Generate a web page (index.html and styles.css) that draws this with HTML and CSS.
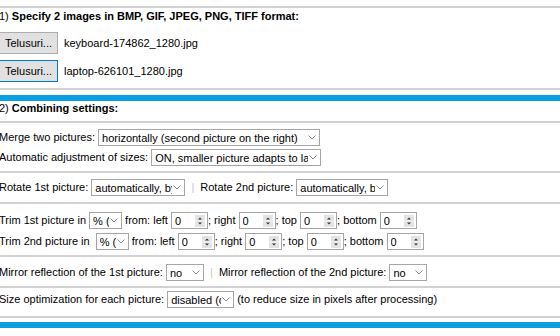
FILE: index.html
```html
<!DOCTYPE html>
<html>
<head>
<meta charset="utf-8">
<link rel="stylesheet" href="styles.css">
</head>
<body>
<div class="page">
  <div class="block b1">
    <div class="hd"><span class="n">1)</span> Specify 2 images in BMP, GIF, JPEG, PNG, TIFF format:</div>
    <div class="file"><button class="btn">Telusuri...</button><span class="fname">keyboard-174862_1280.jpg</span></div>
    <div class="file"><button class="btn focus">Telusuri...</button><span class="fname">laptop-626101_1280.jpg</span></div>
  </div>
  <div class="bar"></div>
  <div class="block b2">
    <div class="hd"><span class="n">2)</span> Combining settings:</div>
  </div>
  <div class="block merge">
    <div class="line">Merge two pictures: <span class="sel w-merge"><select><option>horizontally (second picture on the right)</option></select><svg class="chev" width="8" height="5" viewBox="0 0 8 5"><polyline points="0.5,0.5 4,4 7.5,0.5" fill="none" stroke="#8a8a8a" stroke-width="1"/></svg></span></div>
    <div class="line">Automatic adjustment of sizes: <span class="sel w-auto"><select><option>ON, smaller picture adapts to larger</option></select><svg class="chev" width="8" height="5" viewBox="0 0 8 5"><polyline points="0.5,0.5 4,4 7.5,0.5" fill="none" stroke="#8a8a8a" stroke-width="1"/></svg></span></div>
  </div>
  <div class="block rotate">
    <div class="line">Rotate 1st picture: <span class="sel w-rot1"><select><option>automatically, by EXIF</option></select><svg class="chev" width="8" height="5" viewBox="0 0 8 5"><polyline points="0.5,0.5 4,4 7.5,0.5" fill="none" stroke="#8a8a8a" stroke-width="1"/></svg></span> <span class="sep">|</span> Rotate 2nd picture: <span class="sel w-rot2"><select><option>automatically, by EXIF</option></select><svg class="chev" width="8" height="5" viewBox="0 0 8 5"><polyline points="0.5,0.5 4,4 7.5,0.5" fill="none" stroke="#8a8a8a" stroke-width="1"/></svg></span></div>
  </div>
  <div class="block trim">
    <div class="line">Trim 1st picture in <span class="sel w-unit"><select><option>% (percent)</option></select><svg class="chev" width="8" height="5" viewBox="0 0 8 5"><polyline points="0.5,0.5 4,4 7.5,0.5" fill="none" stroke="#8a8a8a" stroke-width="1"/></svg></span> from: left <span class="num"><input value="0"><svg class="spin" width="10" height="12" viewBox="0 0 10 12"><rect width="10" height="12" fill="#e3e3e3"/><line x1="0" y1="6" x2="10" y2="6" stroke="#f6f6f6"/><polygon points="3,4.5 5,2.5 7,4.5" fill="#333"/><polygon points="3,7.5 5,9.5 7,7.5" fill="#333"/></svg></span>; right <span class="num"><input value="0"><svg class="spin" width="10" height="12" viewBox="0 0 10 12"><rect width="10" height="12" fill="#e3e3e3"/><line x1="0" y1="6" x2="10" y2="6" stroke="#f6f6f6"/><polygon points="3,4.5 5,2.5 7,4.5" fill="#333"/><polygon points="3,7.5 5,9.5 7,7.5" fill="#333"/></svg></span>; top <span class="num"><input value="0"><svg class="spin" width="10" height="12" viewBox="0 0 10 12"><rect width="10" height="12" fill="#e3e3e3"/><line x1="0" y1="6" x2="10" y2="6" stroke="#f6f6f6"/><polygon points="3,4.5 5,2.5 7,4.5" fill="#333"/><polygon points="3,7.5 5,9.5 7,7.5" fill="#333"/></svg></span>; bottom <span class="num"><input value="0"><svg class="spin" width="10" height="12" viewBox="0 0 10 12"><rect width="10" height="12" fill="#e3e3e3"/><line x1="0" y1="6" x2="10" y2="6" stroke="#f6f6f6"/><polygon points="3,4.5 5,2.5 7,4.5" fill="#333"/><polygon points="3,7.5 5,9.5 7,7.5" fill="#333"/></svg></span></div>
    <div class="line">Trim 2nd picture in <span class="sel w-unit shift"><select><option>% (percent)</option></select><svg class="chev" width="8" height="5" viewBox="0 0 8 5"><polyline points="0.5,0.5 4,4 7.5,0.5" fill="none" stroke="#8a8a8a" stroke-width="1"/></svg></span> from: left <span class="num"><input value="0"><svg class="spin" width="10" height="12" viewBox="0 0 10 12"><rect width="10" height="12" fill="#e3e3e3"/><line x1="0" y1="6" x2="10" y2="6" stroke="#f6f6f6"/><polygon points="3,4.5 5,2.5 7,4.5" fill="#333"/><polygon points="3,7.5 5,9.5 7,7.5" fill="#333"/></svg></span>; right <span class="num"><input value="0"><svg class="spin" width="10" height="12" viewBox="0 0 10 12"><rect width="10" height="12" fill="#e3e3e3"/><line x1="0" y1="6" x2="10" y2="6" stroke="#f6f6f6"/><polygon points="3,4.5 5,2.5 7,4.5" fill="#333"/><polygon points="3,7.5 5,9.5 7,7.5" fill="#333"/></svg></span>; top <span class="num"><input value="0"><svg class="spin" width="10" height="12" viewBox="0 0 10 12"><rect width="10" height="12" fill="#e3e3e3"/><line x1="0" y1="6" x2="10" y2="6" stroke="#f6f6f6"/><polygon points="3,4.5 5,2.5 7,4.5" fill="#333"/><polygon points="3,7.5 5,9.5 7,7.5" fill="#333"/></svg></span>; bottom <span class="num"><input value="0"><svg class="spin" width="10" height="12" viewBox="0 0 10 12"><rect width="10" height="12" fill="#e3e3e3"/><line x1="0" y1="6" x2="10" y2="6" stroke="#f6f6f6"/><polygon points="3,4.5 5,2.5 7,4.5" fill="#333"/><polygon points="3,7.5 5,9.5 7,7.5" fill="#333"/></svg></span></div>
  </div>
  <div class="block mirror">
    <div class="line">Mirror reflection of the 1st picture: <span class="sel w-no"><select><option>no</option></select><svg class="chev" width="8" height="5" viewBox="0 0 8 5"><polyline points="0.5,0.5 4,4 7.5,0.5" fill="none" stroke="#8a8a8a" stroke-width="1"/></svg></span> <span class="sep">|</span> Mirror reflection of the 2nd picture: <span class="sel w-no"><select><option>no</option></select><svg class="chev" width="8" height="5" viewBox="0 0 8 5"><polyline points="0.5,0.5 4,4 7.5,0.5" fill="none" stroke="#8a8a8a" stroke-width="1"/></svg></span></div>
  </div>
  <div class="block size">
    <div class="line">Size optimization for each picture: <span class="sel w-size"><select><option>disabled (copy as is)</option></select><svg class="chev" width="8" height="5" viewBox="0 0 8 5"><polyline points="0.5,0.5 4,4 7.5,0.5" fill="none" stroke="#8a8a8a" stroke-width="1"/></svg></span> (to reduce size in pixels after processing)</div>
  </div>
  <div class="bar bar2"></div>
</div>
</body>
</html>
```
FILE: styles.css
```css
* { box-sizing: border-box; }
body {
  margin: 0;
  background: #fff;
  color: #000;
  font: 11px "Liberation Sans", Arial, sans-serif;
}
.page {
  margin-left: -1px;
  padding-top: 6px;
}
.block {
  border-bottom: 2px solid #d2d2d2;
}
.b1 {
  border-top: 2px solid #d2d2d2;
  padding: 2px 0 6px;
}
.hd {
  line-height: 13px;
  font-weight: bold;
  white-space: nowrap;
}
.hd .n { font-weight: normal; }
.b1 .hd { margin-bottom: 9px; }
.file {
  display: flex;
  align-items: center;
  height: 22px;
}
.file + .file { margin-top: 6px; }
.btn {
  width: 59px;
  height: 22px;
  padding: 0;
  background: #e1e1e1;
  border: 1px solid #adadad;
  font: 11px "Liberation Sans", Arial, sans-serif;
  color: #000;
}
.btn.focus { border-color: #0078d7; }
.fname { margin-left: 6px; }
.bar {
  height: 6px;
  margin-top: 5px;
  background: #0a9fe0;
}
.bar2 { margin-top: 4px; }
.b2 { padding: 1px 0 6px; }
.line {
  height: 17px;
  line-height: 17px;
  white-space: nowrap;
}
.merge { padding: 6px 0 5px; }
.merge .line + .line { margin-top: 3px; }
.rotate { padding: 6px 0 6px; }
.trim { padding: 8px 0 5px; }
.trim .line + .line { margin-top: 4px; }
.mirror { padding: 7px 0 5px; }
.size { padding: 3px 0 8px; }
.sel {
  display: inline-flex;
  align-items: center;
  vertical-align: top;
  height: 17px;
  border: 1px solid #a6a6a6;
  background: #fff;
}
.sel select {
  appearance: none;
  -webkit-appearance: none;
  flex: 1;
  min-width: 0;
  height: 15px;
  border: none;
  outline: none;
  background: transparent;
  padding: 0 0 0 3px;
  margin: 0;
  font: 11px "Liberation Sans", Arial, sans-serif;
  color: #000;
}
.chev {
  flex: none;
  margin: 0 3px 0 1px;
}
.w-merge { width: 222px; }
.w-auto { width: 170px; }
.w-rot1 { width: 94px; }
.w-rot2 { width: 92px; }
.w-unit { width: 33px; }
.w-unit.shift { margin-left: 3px; }
.w-no { width: 38px; }
.w-size { width: 67px; }
.sep {
  color: #c8c8c8;
  padding: 0 3px;
}
.num {
  display: inline-flex;
  align-items: center;
  vertical-align: top;
  width: 37px;
  height: 17px;
  border: 1px solid #a6a6a6;
  background: #fff;
}
.num input {
  flex: 1;
  min-width: 0;
  height: 15px;
  border: none;
  outline: none;
  padding: 0 0 0 3px;
  margin: 0;
  font: 11px "Liberation Sans", Arial, sans-serif;
  color: #000;
  background: transparent;
}
.spin {
  flex: none;
  margin-right: 2px;
}
```
